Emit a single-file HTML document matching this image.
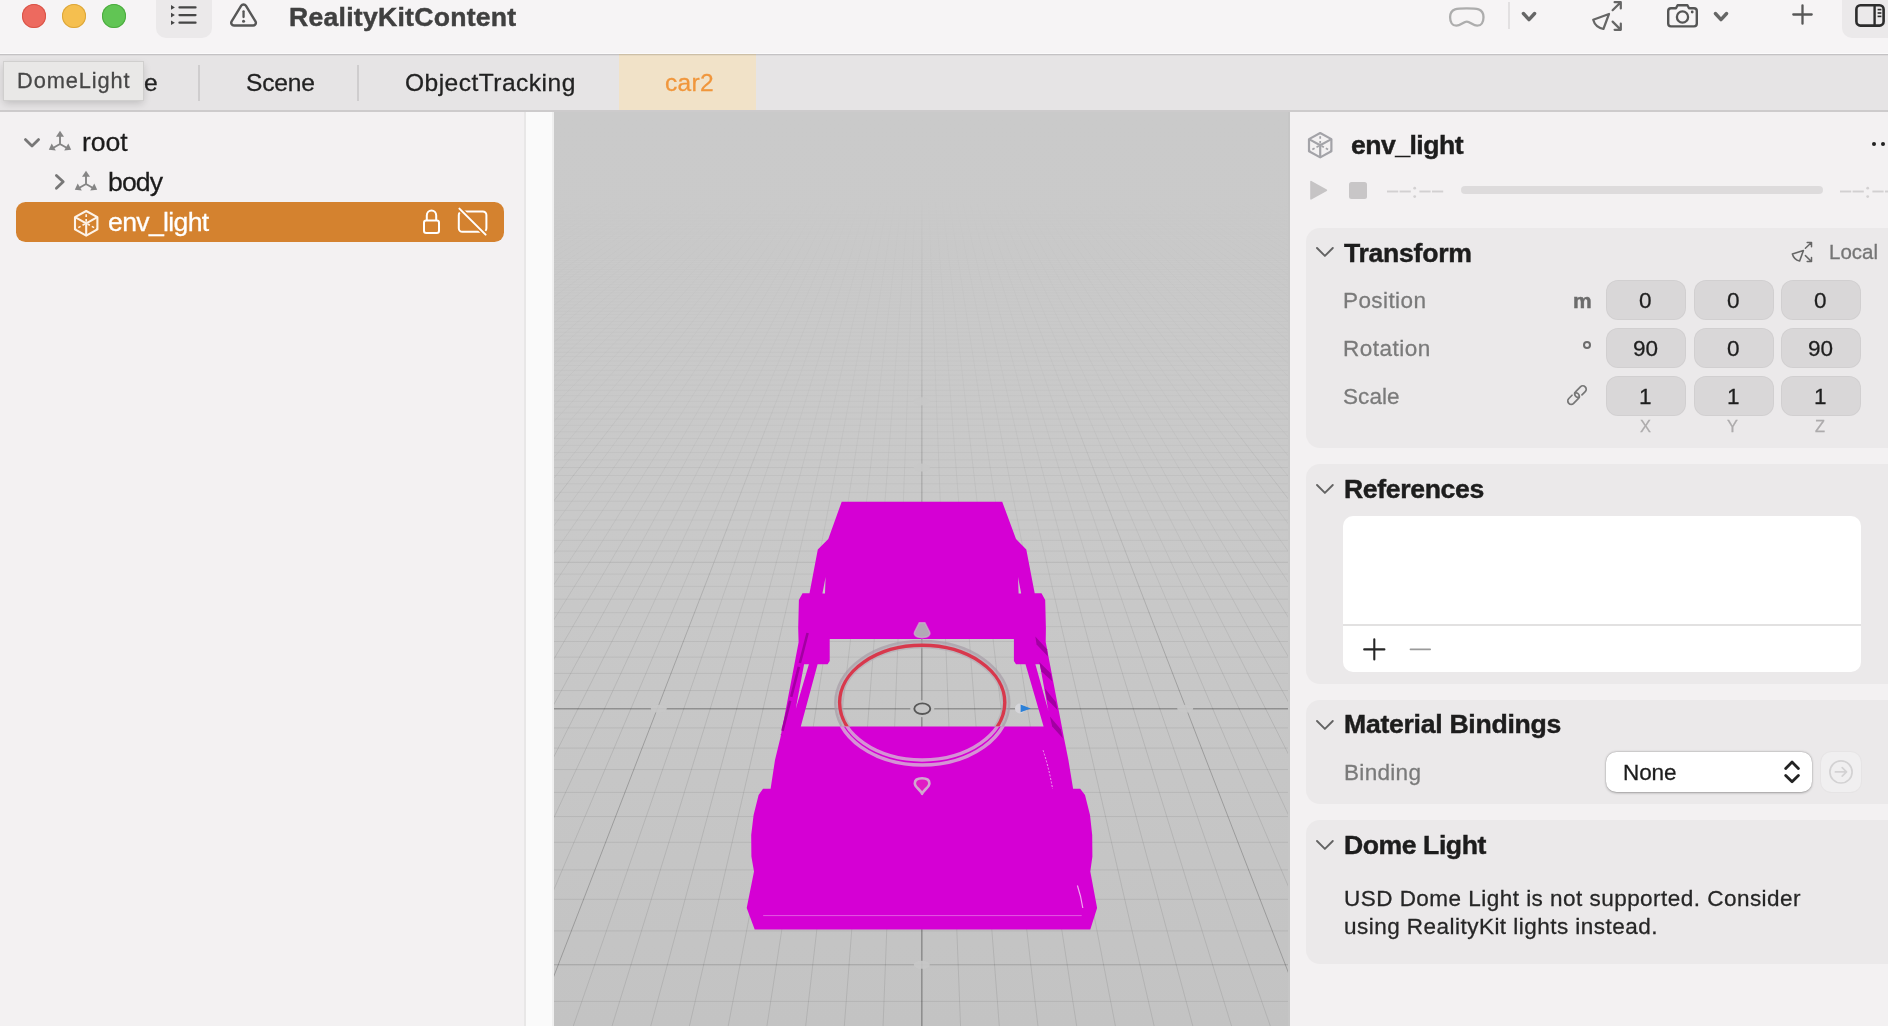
<!DOCTYPE html>
<html><head><meta charset="utf-8"><title>RealityKitContent</title>
<style>
html,body{margin:0;padding:0;}
html{width:1888px;height:1026px;overflow:hidden;}
body{width:1888px;height:1026px;overflow:hidden;background:#f3f1f2;font-family:"Liberation Sans",sans-serif;position:relative;}
.b{position:absolute;display:block;}
.t{position:absolute;white-space:nowrap;line-height:1;will-change:transform;}
#w{position:absolute;left:0;top:0;width:1888px;height:1026px;overflow:hidden;}
</style></head><body><div id="w">
<div class="b" style="left:554px;top:112px;width:734px;height:914px;background:linear-gradient(#cacaca,#c9c9c9 45%,#c3c3c3)"></div>
<svg class="b" style="left:554px;top:112px" width="734" height="914" viewBox="554 112 734 914"><defs><linearGradient id="fade" x1="0" y1="0" x2="0" y2="1" gradientUnits="objectBoundingBox"><stop offset="0.0000" stop-color="#fff" stop-opacity="0"/><stop offset="0.0908" stop-color="#fff" stop-opacity="0"/><stop offset="0.1619" stop-color="#fff" stop-opacity="0.13"/><stop offset="0.3151" stop-color="#fff" stop-opacity="0.3"/><stop offset="0.4902" stop-color="#fff" stop-opacity="0.62"/><stop offset="0.6433" stop-color="#fff" stop-opacity="1"/><stop offset="1.0000" stop-color="#fff" stop-opacity="1"/></linearGradient><linearGradient id="fade2" x1="0" y1="0" x2="0" y2="1" gradientUnits="objectBoundingBox"><stop offset="0.0000" stop-color="#fff" stop-opacity="0"/><stop offset="0.0908" stop-color="#fff" stop-opacity="0"/><stop offset="0.2057" stop-color="#fff" stop-opacity="0.07"/><stop offset="0.3151" stop-color="#fff" stop-opacity="0.14"/><stop offset="0.4902" stop-color="#fff" stop-opacity="0.45"/><stop offset="0.6433" stop-color="#fff" stop-opacity="1"/><stop offset="1.0000" stop-color="#fff" stop-opacity="1"/></linearGradient><mask id="gm" maskUnits="userSpaceOnUse" x="554" y="112" width="734" height="914"><rect x="554" y="112" width="734" height="914" fill="url(#fade)"/></mask><mask id="gm2" maskUnits="userSpaceOnUse" x="554" y="112" width="734" height="914"><rect x="554" y="112" width="734" height="914" fill="url(#fade2)"/></mask></defs><g mask="url(#gm)" fill="none"><path d="M455.6 200 L-1760.8 1030M462.3 200 L-1721.9 1030M469.1 200 L-1683.0 1030M475.8 200 L-1644.1 1030M482.6 200 L-1605.3 1030M489.4 200 L-1566.4 1030M496.1 200 L-1527.5 1030M502.9 200 L-1488.6 1030M509.6 200 L-1449.8 1030M523.1 200 L-1372.0 1030M529.9 200 L-1333.1 1030M536.6 200 L-1294.2 1030M543.4 200 L-1255.4 1030M550.2 200 L-1216.5 1030M556.9 200 L-1177.6 1030M563.7 200 L-1138.7 1030M570.4 200 L-1099.9 1030M577.2 200 L-1061.0 1030M590.7 200 L-983.2 1030M597.5 200 L-944.3 1030M604.2 200 L-905.5 1030M611.0 200 L-866.6 1030M617.7 200 L-827.7 1030M624.5 200 L-788.8 1030M631.2 200 L-750.0 1030M638.0 200 L-711.1 1030M644.8 200 L-672.2 1030M658.3 200 L-594.4 1030M665.0 200 L-555.6 1030M671.8 200 L-516.7 1030M678.5 200 L-477.8 1030M685.3 200 L-438.9 1030M692.1 200 L-400.1 1030M698.8 200 L-361.2 1030M705.6 200 L-322.3 1030M712.3 200 L-283.4 1030M725.8 200 L-205.7 1030M732.6 200 L-166.8 1030M739.4 200 L-127.9 1030M746.1 200 L-89.0 1030M752.9 200 L-50.2 1030M759.6 200 L-11.3 1030M766.4 200 L27.6 1030M773.1 200 L66.5 1030M779.9 200 L105.4 1030M793.4 200 L183.1 1030M800.2 200 L222.0 1030M806.9 200 L260.9 1030M813.7 200 L299.8 1030M820.4 200 L338.6 1030M827.2 200 L377.5 1030M834.0 200 L416.4 1030M840.7 200 L455.3 1030M847.5 200 L494.1 1030M861.0 200 L571.9 1030M867.7 200 L610.8 1030M874.5 200 L649.7 1030M881.3 200 L688.5 1030M888.0 200 L727.4 1030M894.8 200 L766.3 1030M901.5 200 L805.2 1030M908.3 200 L844.0 1030M915.0 200 L882.9 1030M928.6 200 L960.7 1030M935.3 200 L999.6 1030M942.1 200 L1038.4 1030M948.8 200 L1077.3 1030M955.6 200 L1116.2 1030M962.3 200 L1155.1 1030M969.1 200 L1193.9 1030M975.9 200 L1232.8 1030M982.6 200 L1271.7 1030M996.1 200 L1349.5 1030M1002.9 200 L1388.3 1030M1009.6 200 L1427.2 1030M1016.4 200 L1466.1 1030M1023.2 200 L1505.0 1030M1029.9 200 L1543.8 1030M1036.7 200 L1582.7 1030M1043.4 200 L1621.6 1030M1050.2 200 L1660.5 1030M1063.7 200 L1738.2 1030M1070.5 200 L1777.1 1030M1077.2 200 L1816.0 1030M1084.0 200 L1854.9 1030M1090.7 200 L1893.8 1030M1097.5 200 L1932.6 1030M1104.2 200 L1971.5 1030M1111.0 200 L2010.4 1030M1117.8 200 L2049.3 1030M1131.3 200 L2127.0 1030M1138.0 200 L2165.9 1030M1144.8 200 L2204.8 1030M1151.5 200 L2243.7 1030M1158.3 200 L2282.5 1030M1165.1 200 L2321.4 1030M1171.8 200 L2360.3 1030M1178.6 200 L2399.2 1030M1185.3 200 L2438.0 1030M1198.8 200 L2515.8 1030M1205.6 200 L2554.7 1030M1212.4 200 L2593.6 1030M1219.1 200 L2632.4 1030M1225.9 200 L2671.3 1030M1232.6 200 L2710.2 1030M1239.4 200 L2749.1 1030M1246.1 200 L2787.9 1030M1252.9 200 L2826.8 1030M1266.4 200 L2904.6 1030M1273.2 200 L2943.5 1030M1279.9 200 L2982.3 1030M1286.7 200 L3021.2 1030M1293.4 200 L3060.1 1030M1300.2 200 L3099.0 1030M1307.0 200 L3137.8 1030M1313.7 200 L3176.7 1030M1320.5 200 L3215.6 1030M1334.0 200 L3293.4 1030M1340.7 200 L3332.2 1030M1347.5 200 L3371.1 1030M1354.2 200 L3410.0 1030M1361.0 200 L3448.9 1030M1367.8 200 L3487.7 1030M1374.5 200 L3526.6 1030M1381.3 200 L3565.5 1030M1388.0 200 L3604.4 1030" stroke="#000" stroke-opacity="0.085" stroke-width="1"/><path d="M554 1001.4 H1288M554 930.9 H1288M554 899.3 H1288M554 869.9 H1288M554 842.3 H1288M554 816.6 H1288M554 792.4 H1288M554 769.6 H1288M554 748.1 H1288M554 727.9 H1288M554 690.6 H1288M554 673.4 H1288M554 657.1 H1288M554 641.5 H1288M554 626.7 H1288M554 612.7 H1288M554 599.2 H1288M554 586.4 H1288M554 574.1 H1288M554 551.1 H1288M554 540.3 H1288M554 529.9 H1288M554 520.0 H1288M554 510.4 H1288M554 501.2 H1288M554 492.3 H1288M554 483.8 H1288M554 475.5 H1288M554 459.9 H1288M554 452.5 H1288M554 445.4 H1288M554 438.5 H1288M554 431.8 H1288M554 425.3 H1288M554 419.0 H1288M554 412.9 H1288M554 407.0 H1288M554 395.7 H1288M554 390.3 H1288M554 385.1 H1288M554 380.0 H1288M554 375.1 H1288M554 370.3 H1288M554 365.6 H1288M554 361.0 H1288M554 356.6 H1288M554 348.1 H1288M554 344.0 H1288M554 340.0 H1288M554 336.1 H1288M554 332.3 H1288M554 328.5 H1288M554 324.9 H1288M554 321.4 H1288M554 317.9 H1288M554 311.3 H1288M554 308.0 H1288M554 304.9 H1288M554 301.8 H1288M554 298.8 H1288M554 295.8 H1288M554 292.9 H1288M554 290.1 H1288M554 287.4 H1288M554 282.0 H1288M554 279.4 H1288M554 276.8 H1288M554 274.3 H1288M554 271.9 H1288M554 269.5 H1288M554 267.1 H1288M554 264.8 H1288M554 262.6 H1288M554 258.2 H1288M554 256.0 H1288M554 253.9 H1288M554 251.9 H1288M554 249.8 H1288M554 247.8 H1288M554 245.9 H1288M554 244.0 H1288M554 242.1 H1288M554 238.4 H1288M554 236.6 H1288M554 234.8 H1288M554 233.1 H1288M554 231.4 H1288M554 229.7 H1288M554 228.1 H1288M554 226.4 H1288M554 224.8 H1288M554 221.7 H1288M554 220.2 H1288M554 218.7 H1288M554 217.2 H1288M554 215.7 H1288M554 214.3 H1288M554 212.9 H1288M554 211.5 H1288M554 210.1 H1288M554 207.4 H1288M554 206.1 H1288M554 204.8 H1288M554 203.6 H1288M554 202.3 H1288M554 201.1 H1288M554 199.8 H1288M554 198.6 H1288M554 197.4 H1288M554 195.1 H1288M554 194.0 H1288M554 192.9 H1288M554 191.7 H1288M554 190.6 H1288M554 189.6 H1288M554 188.5 H1288M554 187.4 H1288M554 186.4 H1288M554 184.4 H1288M554 183.4 H1288M554 182.4 H1288M554 181.4 H1288M554 180.4 H1288M554 179.5 H1288M554 178.5 H1288M554 177.6 H1288M554 176.7 H1288" stroke="#000" stroke-opacity="0.075" stroke-width="1"/></g><g mask="url(#gm2)" fill="none"><path d="M448.8 200 L-1799.7 1030M516.4 200 L-1410.9 1030M583.9 200 L-1022.1 1030M651.5 200 L-633.3 1030M719.1 200 L-244.5 1030M786.7 200 L144.2 1030M854.2 200 L533.0 1030M989.4 200 L1310.6 1030M1056.9 200 L1699.4 1030M1124.5 200 L2088.1 1030M1192.1 200 L2476.9 1030M1259.7 200 L2865.7 1030M1327.2 200 L3254.5 1030M1394.8 200 L3643.3 1030" stroke="#000" stroke-opacity="0.21" stroke-width="1"/><path d="M554 964.8 H1288M554 562.3 H1288M554 467.6 H1288M554 401.3 H1288M554 352.3 H1288M554 314.6 H1288M554 284.6 H1288M554 260.3 H1288M554 240.2 H1288M554 223.3 H1288M554 208.8 H1288M554 196.3 H1288M554 185.4 H1288M554 175.8 H1288" stroke="#000" stroke-opacity="0.18" stroke-width="1"/></g><g mask="url(#gm)" fill="none"><path d="M921.8 380 V1026" stroke="#000" stroke-opacity="0.27" stroke-width="1.6"/><path d="M921.8 200 V380" stroke="#000" stroke-opacity="0.2" stroke-width="1.6"/><path d="M554 708.7 H1288" stroke="#000" stroke-opacity="0.27" stroke-width="1.4"/></g><ellipse cx="658.8" cy="708.7" rx="8" ry="4" fill="#c8c8c8" opacity="0.9"/><ellipse cx="1185.2" cy="708.7" rx="8" ry="4" fill="#c8c8c8" opacity="0.9"/><ellipse cx="921.8" cy="964.8" rx="8" ry="4" fill="#c8c8c8" opacity="0.9"/><ellipse cx="921.8" cy="562.3" rx="8" ry="4" fill="#c8c8c8" opacity="0.9"/><ellipse cx="921.8" cy="467.6" rx="8" ry="4" fill="#c8c8c8" opacity="0.9"/><ellipse cx="921.8" cy="401.3" rx="8" ry="4" fill="#c8c8c8" opacity="0.9"/><path d="M841.7 501.7 L1002.2 501.7 L1016.0 539.0 L1026.3 549.5 L1034.7 593.2 L1041.5 593.2 L1045.2 600.0 L1045.9 628.0 L1045.7 642.0 L1063.9 737.5 L1068.4 760.0 L1073.1 788.8 L1080.2 788.8 L1085.0 795.0 L1090.0 815.0 L1092.2 835.0 L1092.4 856.5 L1090.3 871.5 L1097.1 908.0 L1090.3 929.4 L754.7 929.4 L746.7 908.0 L754.0 871.5 L751.4 856.5 L751.2 835.0 L753.6 815.0 L758.6 795.0 L763.0 788.8 L770.6 788.8 L775.0 760.0 L780.4 737.7 L798.6 642.2 L798.2 628.0 L798.9 600.0 L802.5 593.2 L809.5 593.2 L817.8 549.5 L828.3 539.0 Z M829.7 639.1 L1013.9 639.1 L1013.9 661.0 L1016.0 664.2 L1025.5 664.2 L1043.6 726.6 L800.8 726.6 L817.6 664.2 L827.6 664.2 L829.7 661.0 Z M804.1 664.3 L808.9 664.3 L795.6 709.5 Z M1035.4 664.2 L1039.8 664.2 L1048.4 711 Z" fill="#d500d4" fill-rule="evenodd"/><path d="M1035.3 636.6 L1047.0 649.2 L1047.9 656.6 L1036.6 644.4 Z" fill="#a200a2"/><path d="M1039.2 661.9 L1050.9 673.6 L1052.2 681.2 L1041.4 671.6 Z" fill="#a200a2"/><path d="M1044.7 688.2 L1055.8 701.9 L1057.5 710.0 L1047.2 699.4 Z" fill="#a200a2"/><path d="M1049.9 716.5 L1060.7 729.2 L1062.8 738.2 L1052.2 726.6 Z" fill="#a200a2"/><path d="M807.6 633 L781.4 735" stroke="#a200a2" stroke-width="2.6" fill="none" stroke-dasharray="31 4" stroke-dashoffset="0"/><path d="M825.6 577 L822.4 593.4 L825 593.4 Z M1018 577 L1021.2 593.4 L1018.6 593.4 Z" fill="#c7c7c7"/><path d="M763.2 915.6 H1081.7" stroke="#ea88ea" stroke-width="1" fill="none" stroke-opacity="0.65"/><path d="M1077.4 885.5 Q1081 896 1082.8 908" stroke="#f0a6f0" stroke-width="1.2" fill="none"/><path d="M1043.1 750.3 Q1049 768 1052.6 789" stroke="#f0a0f0" stroke-width="1" stroke-dasharray="2 1.6" fill="none"/><defs><clipPath id="cu"><rect x="800" y="630" width="250" height="96.6"/></clipPath><clipPath id="cl"><rect x="800" y="726.6" width="250" height="60"/></clipPath></defs><g clip-path="url(#cu)" fill="none"><ellipse cx="922.3" cy="703" rx="87" ry="62" stroke="#a79da7" stroke-width="2.4" stroke-opacity="0.7"/><ellipse cx="922.2" cy="702.6" rx="82.6" ry="57.3" stroke="#b3a9b3" stroke-width="6.6" stroke-opacity="0.6"/><ellipse cx="922.2" cy="702.6" rx="82.6" ry="57.3" stroke="#d8384c" stroke-width="3.4"/></g><g clip-path="url(#cl)" fill="none" stroke="#d6ccd6" stroke-opacity="0.72" stroke-width="3.5"><ellipse cx="922.3" cy="703" rx="87" ry="62"/><ellipse cx="922.2" cy="702.6" rx="82.6" ry="57.3"/></g><ellipse cx="922.3" cy="708.7" rx="12" ry="8.5" fill="#c6c6c6"/><ellipse cx="922.3" cy="708.7" rx="8" ry="5.3" fill="none" stroke="#585858" stroke-width="1.9"/><circle cx="1020" cy="708.5" r="5" fill="#d6d6da"/><path d="M1020.6 704.6 L1030.8 708.4 L1020.6 712.2 Z" fill="#2b80d8"/><path d="M919.4 622.7 L924.8 622.7 L929.6 632 C930.6 634.2 929.4 637.4 922.1 637.6 C914.8 637.4 913.6 634.2 914.6 632 Z" fill="#b2a8b6" stroke="#d0acd0" stroke-opacity="0.7" stroke-width="1.6" stroke-linejoin="round"/><path d="M922.1 793.8 C920.4 789.8 914.8 787 914.8 783.4 C914.8 779.6 918 778.3 922.1 778.3 C926.2 778.3 929.4 779.6 929.4 783.4 C929.4 787 923.8 789.8 922.1 793.8 Z" fill="#e01cc4" stroke="#d0c2d0" stroke-opacity="0.85" stroke-width="2.6" stroke-linejoin="round"/></svg>
<div class="b" style="left:0px;top:112px;width:524px;height:914px;background:#f3f1f2;"></div>
<div class="b" style="left:524px;top:112px;width:2px;height:914px;background:#e8e7e7;"></div>
<div class="b" style="left:526px;top:112px;width:26px;height:914px;background:#fafafa;"></div>
<div class="b" style="left:552px;top:112px;width:2px;height:914px;background:#efefef;"></div>
<svg class="b" style="left:20px;top:134px;" width="24" height="18" viewBox="20 134 24 18"><path d="M25.4 139.6 L32 146 L38.6 139.6" fill="none" stroke="#777" stroke-width="2.8" stroke-linecap="round" stroke-linejoin="round"/></svg>
<svg class="b" style="left:45.85px;top:128.2px;" width="28" height="26" viewBox="45.85 128.2 28 26"><g fill="#858585" stroke="none"><path d="M59.85 131 L63.85 137 L55.85 137 Z"/><path d="M48.65 150 L51.55 143.8 L55.65 150.8 Z"/><path d="M71.05 150 L68.15 143.8 L64.05 150.8 Z"/></g><path d="M59.85 136.2 L59.85 144.2 M59.85 144.2 L52.85 148.2 M59.85 144.2 L66.85 148.2" stroke="#858585" stroke-width="1.9" fill="none"/></svg>
<div class="t" style="left:81.60px;top:128.96px;font-size:26.624px;-webkit-text-stroke:0.28px;letter-spacing:-0.093px;color:#1c1c1c;">root</div>
<svg class="b" style="left:50px;top:170px;" width="20" height="24" viewBox="50 170 20 24"><path d="M56.4 175.4 L63.2 181.8 L56.4 188.2" fill="none" stroke="#777" stroke-width="2.8" stroke-linecap="round" stroke-linejoin="round"/></svg>
<svg class="b" style="left:72px;top:167.9px;" width="28" height="26" viewBox="72 167.9 28 26"><g fill="#858585" stroke="none"><path d="M86 170.7 L90 176.7 L82 176.7 Z"/><path d="M74.8 189.7 L77.7 183.5 L81.8 190.5 Z"/><path d="M97.2 189.7 L94.3 183.5 L90.2 190.5 Z"/></g><path d="M86 175.9 L86 183.9 M86 183.9 L79 187.9 M86 183.9 L93 187.9" stroke="#858585" stroke-width="1.9" fill="none"/></svg>
<div class="t" style="left:108.40px;top:169.06px;font-size:26.624px;-webkit-text-stroke:0.28px;letter-spacing:-0.912px;color:#1c1c1c;">body</div>
<div class="b" style="left:16px;top:202.2px;width:488px;height:39.6px;background:#d4822f;border-radius:9.5px;"></div>
<svg class="b" style="left:71.8px;top:207.6px;" width="28.4" height="30.6" viewBox="71.8 207.6 28.4 30.6"><path d="M86 210.6 L97.2 216.75 L97.2 229.05 L86 235.2 L74.8 229.05 L74.8 216.75 Z" fill="none" stroke="#fdf3e8" stroke-width="2.1" stroke-linejoin="round"/><path d="M86 222.9 L74.8 216.75 M86 222.9 L97.2 216.75 M86 222.9 L86 235.2" fill="none" stroke="#fdf3e8" stroke-width="2.1"/><path d="M86 222.9 L86 210.6 M86 222.9 L74.8 229.05 M86 222.9 L97.2 229.05" fill="none" stroke="#fdf3e8" stroke-width="1.68" stroke-dasharray="2.6 2.2" stroke-dashoffset="-1.6"/></svg>
<div class="t" style="left:107.70px;top:209.06px;font-size:26.624px;-webkit-text-stroke:0.28px;letter-spacing:-0.660px;color:#ffffff;">env_light</div>
<svg class="b" style="left:420px;top:206px;" width="24" height="30" viewBox="420 206 24 30"><rect x="424" y="220.6" width="15" height="12.4" rx="2.2" fill="none" stroke="#fff" stroke-width="2"/><path d="M426.8 220.4 L426.8 215.6 A4.7 5.2 0 0 1 436.2 215.6 L436.2 220.4" fill="none" stroke="#fff" stroke-width="2"/></svg>
<svg class="b" style="left:454px;top:204px;" width="38" height="34" viewBox="454 204 38 34"><rect x="458.8" y="211.4" width="27.6" height="20.4" rx="3.6" fill="none" stroke="#fff" stroke-width="2"/><line x1="459" y1="208.2" x2="485.8" y2="234.8" stroke="#d4822f" stroke-width="5"/><line x1="459.4" y1="208.6" x2="485.6" y2="234.6" stroke="#fff" stroke-width="2" stroke-linecap="round"/></svg>
<div class="b" style="left:1290px;top:112px;width:598px;height:914px;background:#f3f1f2;"></div>
<div class="b" style="left:1288px;top:112px;width:2px;height:914px;background:#c6c6c6;"></div>
<svg class="b" style="left:1305.9px;top:129.6px;" width="28.4" height="30.4" viewBox="1305.9 129.6 28.4 30.4"><path d="M1320.1 132.6 L1331.3 138.7 L1331.3 150.9 L1320.1 157 L1308.9 150.9 L1308.9 138.7 Z" fill="none" stroke="#a3a3a8" stroke-width="2.2" stroke-linejoin="round"/><path d="M1320.1 144.8 L1308.9 138.7 M1320.1 144.8 L1331.3 138.7 M1320.1 144.8 L1320.1 157" fill="none" stroke="#a3a3a8" stroke-width="2.2"/><path d="M1320.1 144.8 L1320.1 132.6 M1320.1 144.8 L1308.9 150.9 M1320.1 144.8 L1331.3 150.9" fill="none" stroke="#a3a3a8" stroke-width="1.76" stroke-dasharray="2.6 2.2" stroke-dashoffset="-1.6"/></svg>
<div class="t" style="left:1351.00px;top:131.66px;font-size:26.624px;font-weight:bold;-webkit-text-stroke:0.45px;letter-spacing:-0.534px;color:#1d1d1d;">env_light</div>
<div class="b" style="left:1871.75px;top:141.9px;width:4.6px;height:4.6px;border-radius:3px;background:#222"></div>
<div class="b" style="left:1880.7px;top:141.9px;width:4.6px;height:4.6px;border-radius:3px;background:#222"></div>
<svg class="b" style="left:1306px;top:178px;" width="26" height="26" viewBox="1306 178 26 26"><path d="M1311 181.6 L1326.4 190.2 L1311 198.8 Z" fill="#c6c4c5" stroke="#c6c4c5" stroke-width="1.6" stroke-linejoin="round"/></svg>
<div class="b" style="left:1349.2px;top:182.4px;width:17.4px;height:16.2px;background:#c8c6c7;border-radius:2.5px;"></div>
<svg class="b" style="left:1384px;top:184px;" width="64" height="16" viewBox="1384 184 64 16"><line x1="1387" y1="191.5" x2="1398.2" y2="191.5" stroke="#d2d0d1" stroke-width="1.9"/><line x1="1399.6" y1="191.5" x2="1410.8" y2="191.5" stroke="#d2d0d1" stroke-width="1.9"/><line x1="1419.4" y1="191.5" x2="1430.6" y2="191.5" stroke="#d2d0d1" stroke-width="1.9"/><line x1="1432" y1="191.5" x2="1443.2" y2="191.5" stroke="#d2d0d1" stroke-width="1.9"/><circle cx="1414.7" cy="188.2" r="1.4" fill="#d3d1d2"/><circle cx="1414.7" cy="196.6" r="1.4" fill="#d3d1d2"/></svg>
<div class="b" style="left:1461px;top:186.2px;width:362px;height:8.2px;background:#dddbdc;border-radius:4.1px;"></div>
<svg class="b" style="left:1836px;top:184px;" width="52" height="16" viewBox="1836 184 52 16"><line x1="1840" y1="191.5" x2="1851.2" y2="191.5" stroke="#d2d0d1" stroke-width="1.9"/><line x1="1852.6" y1="191.5" x2="1863.8" y2="191.5" stroke="#d2d0d1" stroke-width="1.9"/><line x1="1872.4" y1="191.5" x2="1883.6" y2="191.5" stroke="#d2d0d1" stroke-width="1.9"/><line x1="1885" y1="191.5" x2="1896.2" y2="191.5" stroke="#d2d0d1" stroke-width="1.9"/><circle cx="1867.7" cy="188.2" r="1.4" fill="#d3d1d2"/><circle cx="1867.7" cy="196.6" r="1.4" fill="#d3d1d2"/></svg>
<div class="b" style="left:1306px;top:228px;width:600px;height:220px;background:#ebe9ea;border-radius:14px;"></div>
<svg class="b" style="left:1313.6px;top:245.3px;" width="21.8" height="13.9" viewBox="1313.6 245.3 21.8 13.9"><path d="M1316.6 248.3 L1324.5 256.2 L1332.4 248.3" fill="none" stroke="#636363" stroke-width="1.9" stroke-linecap="round" stroke-linejoin="round"/></svg>
<div class="t" style="left:1344.20px;top:240.06px;font-size:26.624px;font-weight:bold;-webkit-text-stroke:0.45px;letter-spacing:-0.275px;color:#1d1d1d;">Transform</div>
<svg class="b" style="left:1788px;top:238px;" width="28" height="28" viewBox="1788 238 28 28"><path d="M1803.4 250.6 L1799.6 261 C1796 260.2 1793.2 257.4 1792.4 253.9 Z" fill="none" stroke="#666" stroke-width="1.6" stroke-linejoin="round"/><path d="M1805.4 248.2 L1811.2 242.8 M1807.2 242.6 L1811.5 242.6 L1811.5 246.8" fill="none" stroke="#666" stroke-width="1.5" stroke-linecap="round" stroke-linejoin="round"/><path d="M1805.4 255.6 L1811.2 261.2 M1807.2 261.5 L1811.5 261.5 L1811.5 257.4" fill="none" stroke="#666" stroke-width="1.5" stroke-linecap="round" stroke-linejoin="round"/></svg>
<div class="t" style="left:1829.10px;top:242.26px;font-size:20.48px;-webkit-text-stroke:0.28px;letter-spacing:0.010px;color:#757575;">Local</div>
<div class="t" style="left:1343.20px;top:289.53px;font-size:22.528px;-webkit-text-stroke:0.28px;letter-spacing:0.407px;color:#7a7a7a;">Position</div>
<div class="b" style="left:1606px;top:280px;width:80px;height:40px;background:#d9d7d8;border-radius:12px;box-shadow:inset 0 0 0 1px rgba(0,0,0,.035);"></div><div class="t" style="left:1639.14px;top:289.63px;font-size:22.528px;-webkit-text-stroke:0.28px;color:#1e1e1e;">0</div>
<div class="b" style="left:1693.6px;top:280px;width:80px;height:40px;background:#d9d7d8;border-radius:12px;box-shadow:inset 0 0 0 1px rgba(0,0,0,.035);"></div><div class="t" style="left:1726.74px;top:289.63px;font-size:22.528px;-webkit-text-stroke:0.28px;color:#1e1e1e;">0</div>
<div class="b" style="left:1781px;top:280px;width:80px;height:40px;background:#d9d7d8;border-radius:12px;box-shadow:inset 0 0 0 1px rgba(0,0,0,.035);"></div><div class="t" style="left:1814.14px;top:289.63px;font-size:22.528px;-webkit-text-stroke:0.28px;color:#1e1e1e;">0</div>
<div class="t" style="left:1343.20px;top:337.53px;font-size:22.528px;-webkit-text-stroke:0.28px;letter-spacing:0.484px;color:#7a7a7a;">Rotation</div>
<div class="b" style="left:1606px;top:328px;width:80px;height:40px;background:#d9d7d8;border-radius:12px;box-shadow:inset 0 0 0 1px rgba(0,0,0,.035);"></div><div class="t" style="left:1632.87px;top:337.63px;font-size:22.528px;-webkit-text-stroke:0.28px;color:#1e1e1e;">90</div>
<div class="b" style="left:1693.6px;top:328px;width:80px;height:40px;background:#d9d7d8;border-radius:12px;box-shadow:inset 0 0 0 1px rgba(0,0,0,.035);"></div><div class="t" style="left:1726.74px;top:337.63px;font-size:22.528px;-webkit-text-stroke:0.28px;color:#1e1e1e;">0</div>
<div class="b" style="left:1781px;top:328px;width:80px;height:40px;background:#d9d7d8;border-radius:12px;box-shadow:inset 0 0 0 1px rgba(0,0,0,.035);"></div><div class="t" style="left:1807.87px;top:337.63px;font-size:22.528px;-webkit-text-stroke:0.28px;color:#1e1e1e;">90</div>
<div class="t" style="left:1343.20px;top:385.53px;font-size:22.528px;-webkit-text-stroke:0.28px;letter-spacing:0.061px;color:#7a7a7a;">Scale</div>
<div class="b" style="left:1606px;top:376px;width:80px;height:40px;background:#d9d7d8;border-radius:12px;box-shadow:inset 0 0 0 1px rgba(0,0,0,.035);"></div><div class="t" style="left:1639.14px;top:385.63px;font-size:22.528px;-webkit-text-stroke:0.28px;color:#1e1e1e;">1</div>
<div class="b" style="left:1693.6px;top:376px;width:80px;height:40px;background:#d9d7d8;border-radius:12px;box-shadow:inset 0 0 0 1px rgba(0,0,0,.035);"></div><div class="t" style="left:1726.74px;top:385.63px;font-size:22.528px;-webkit-text-stroke:0.28px;color:#1e1e1e;">1</div>
<div class="b" style="left:1781px;top:376px;width:80px;height:40px;background:#d9d7d8;border-radius:12px;box-shadow:inset 0 0 0 1px rgba(0,0,0,.035);"></div><div class="t" style="left:1814.14px;top:385.63px;font-size:22.528px;-webkit-text-stroke:0.28px;color:#1e1e1e;">1</div>
<div class="t" style="left:1572.60px;top:289.53px;font-size:20.992px;font-weight:bold;-webkit-text-stroke:0.45px;color:#6c6c6c;">m</div>
<div class="b" style="left:1582.6px;top:341px;width:8px;height:8px;border-radius:5px;box-shadow:inset 0 0 0 2px #6c6c6c"></div>
<svg class="b" style="left:1562px;top:380px;" width="30" height="30" viewBox="1562 380 30 30"><g transform="translate(1577 395.1) rotate(-45)" fill="none" stroke="#777" stroke-width="1.7" stroke-linecap="round"><path d="M-3.6 -3.4 L-8.2 -3.4 A3.4 3.4 0 0 0 -8.2 3.4 L-1.6 3.4 A3.4 3.4 0 0 0 -0.2 -3.1"/><path d="M3.6 3.4 L8.2 3.4 A3.4 3.4 0 0 0 8.2 -3.4 L1.6 -3.4 A3.4 3.4 0 0 0 0.2 3.1"/></g></svg>
<div class="t" style="left:1639.94px;top:417.73px;font-size:16.384px;-webkit-text-stroke:0.28px;color:#adabac;">X</div>
<div class="t" style="left:1727.14px;top:417.73px;font-size:16.384px;-webkit-text-stroke:0.28px;color:#adabac;">Y</div>
<div class="t" style="left:1815.40px;top:417.73px;font-size:16.384px;-webkit-text-stroke:0.28px;color:#adabac;">Z</div>
<div class="b" style="left:1306px;top:464px;width:600px;height:219.5px;background:#ebe9ea;border-radius:14px;"></div>
<svg class="b" style="left:1313.6px;top:481.5px;" width="21.8" height="13.9" viewBox="1313.6 481.5 21.8 13.9"><path d="M1316.6 484.5 L1324.5 492.4 L1332.4 484.5" fill="none" stroke="#636363" stroke-width="1.9" stroke-linecap="round" stroke-linejoin="round"/></svg>
<div class="t" style="left:1344.00px;top:476.16px;font-size:26.624px;font-weight:bold;-webkit-text-stroke:0.45px;letter-spacing:-0.352px;color:#1d1d1d;">References</div>
<div class="b" style="left:1343px;top:516.4px;width:518px;height:155.4px;background:#ffffff;border-radius:10px;"></div>
<div class="b" style="left:1343px;top:624px;width:518px;height:1.6px;background:#e2e1e1;"></div>
<svg class="b" style="left:1360px;top:636px;" width="76" height="28" viewBox="1360 636 76 28"><path d="M1364.2 649.4 L1384.4 649.4 M1374.3 639.3 L1374.3 659.5" stroke="#262626" stroke-width="2.1" stroke-linecap="round"/><path d="M1410.4 649.4 L1430.2 649.4" stroke="#9a9a9a" stroke-width="1.6" stroke-linecap="round"/></svg>
<div class="b" style="left:1306px;top:700px;width:600px;height:104px;background:#ebe9ea;border-radius:14px;"></div>
<svg class="b" style="left:1313.6px;top:717.7px;" width="21.8" height="13.9" viewBox="1313.6 717.7 21.8 13.9"><path d="M1316.6 720.7 L1324.5 728.6 L1332.4 720.7" fill="none" stroke="#636363" stroke-width="1.9" stroke-linecap="round" stroke-linejoin="round"/></svg>
<div class="t" style="left:1344.00px;top:711.16px;font-size:26.624px;font-weight:bold;-webkit-text-stroke:0.45px;letter-spacing:-0.281px;color:#1d1d1d;">Material Bindings</div>
<div class="t" style="left:1343.60px;top:761.63px;font-size:22.528px;-webkit-text-stroke:0.28px;letter-spacing:0.307px;color:#7a7a7a;">Binding</div>
<div class="b" style="left:1606.3px;top:752px;width:205.8px;height:40px;background:#ffffff;border-radius:10.5px;box-shadow:0 0.5px 2.5px rgba(0,0,0,.32),0 0 0 0.5px rgba(0,0,0,.06);"></div>
<div class="t" style="left:1622.80px;top:761.63px;font-size:22.528px;-webkit-text-stroke:0.28px;letter-spacing:-0.086px;color:#1d1d1d;">None</div>
<svg class="b" style="left:1780px;top:756px;" width="24" height="32" viewBox="1780 756 24 32"><path d="M1785.7 768.5 L1792.05 762.1 L1798.4 768.5 M1785.7 775.4 L1792.05 781.8 L1798.4 775.4" fill="none" stroke="#232323" stroke-width="2.8" stroke-linecap="round" stroke-linejoin="round"/></svg>
<div class="b" style="left:1821px;top:752px;width:39.6px;height:40px;background:#f0eff0;border-radius:10.5px;box-shadow:0 0 0 1px rgba(0,0,0,.02);"></div>
<svg class="b" style="left:1826px;top:757px;" width="30" height="30" viewBox="1826 757 30 30"><circle cx="1841" cy="771.9" r="11.1" fill="none" stroke="#d3d2d3" stroke-width="1.7"/><path d="M1835.4 771.9 L1846.4 771.9 M1842.2 767.6 L1846.5 771.9 L1842.2 776.2" fill="none" stroke="#d3d2d3" stroke-width="1.7" stroke-linecap="round" stroke-linejoin="round"/></svg>
<div class="b" style="left:1306px;top:819.6px;width:600px;height:144.2px;background:#ebe9ea;border-radius:14px;"></div>
<svg class="b" style="left:1313.6px;top:837.9px;" width="21.8" height="13.9" viewBox="1313.6 837.9 21.8 13.9"><path d="M1316.6 840.9 L1324.5 848.8 L1332.4 840.9" fill="none" stroke="#636363" stroke-width="1.9" stroke-linecap="round" stroke-linejoin="round"/></svg>
<div class="t" style="left:1344.00px;top:831.96px;font-size:26.624px;font-weight:bold;-webkit-text-stroke:0.45px;letter-spacing:-0.447px;color:#1d1d1d;">Dome Light</div>
<div class="t" style="left:1343.80px;top:887.83px;font-size:22.528px;-webkit-text-stroke:0.28px;letter-spacing:0.463px;color:#262626;">USD Dome Light is not supported. Consider</div>
<div class="t" style="left:1343.80px;top:916.13px;font-size:22.528px;-webkit-text-stroke:0.28px;letter-spacing:0.462px;color:#262626;">using RealityKit lights instead.</div>
<div class="b" style="left:0px;top:0px;width:1888px;height:54px;background:#f6f4f5;"></div>
<div class="b" style="left:0px;top:53px;width:1888px;height:1px;background:#fbfafb;"></div>
<div class="b" style="left:0px;top:54px;width:1888px;height:1px;background:#c4c2c4;"></div>
<div class="b" style="left:0px;top:55px;width:1888px;height:55px;background:#e6e4e5;"></div>
<div class="b" style="left:0px;top:55px;width:1888px;height:1px;background:#dcdadb;"></div>
<div class="b" style="left:0px;top:110px;width:1888px;height:2px;background:#cdcbcc;"></div>
<div class="b" style="left:22px;top:4px;width:24px;height:24px;border-radius:12px;background:#ed6a5f;box-shadow:inset 0 0 0 1px #d95448"></div>
<div class="b" style="left:62px;top:4px;width:24px;height:24px;border-radius:12px;background:#f5bf4f;box-shadow:inset 0 0 0 1px #dca63a"></div>
<div class="b" style="left:102px;top:4px;width:24px;height:24px;border-radius:12px;background:#61c554;box-shadow:inset 0 0 0 1px #4cab3f"></div>
<div class="b" style="left:156px;top:-12px;width:56px;height:50px;background:#ebe9ea;border-radius:10px;"></div>
<svg class="b" style="left:160px;top:0px;" width="50" height="40" viewBox="160 0 50 40"><path d="M171 5.10 L174.9 7.40 L171 9.70 Z" fill="#464646"/><line x1="179.5" y1="7.40" x2="195.5" y2="7.40" stroke="#464646" stroke-width="2.3" stroke-linecap="round"/><path d="M171 12.80 L174.9 15.10 L171 17.40 Z" fill="#464646"/><line x1="179.5" y1="15.10" x2="195.5" y2="15.10" stroke="#464646" stroke-width="2.3" stroke-linecap="round"/><path d="M171 20.40 L174.9 22.70 L171 25.00 Z" fill="#464646"/><line x1="179.5" y1="22.70" x2="195.5" y2="22.70" stroke="#464646" stroke-width="2.3" stroke-linecap="round"/></svg>
<svg class="b" style="left:226px;top:0px;" width="36" height="32" viewBox="226 0 36 32"><path d="M241.25 5.74 A2.70 2.70 0 0 1 245.85 5.74 L255.47 21.39 A2.70 2.70 0 0 1 253.17 25.50 L233.93 25.50 A2.70 2.70 0 0 1 231.63 21.39 Z" fill="none" stroke="#575757" stroke-width="2.4"/><line x1="243.55" y1="11.3" x2="243.55" y2="17" stroke="#575757" stroke-width="2.3" stroke-linecap="round"/><circle cx="243.55" cy="21.3" r="1.55" fill="#575757"/></svg>
<div class="t" style="left:289.20px;top:3.86px;font-size:26.624px;font-weight:bold;-webkit-text-stroke:0.45px;letter-spacing:0.246px;color:#404040;">RealityKitContent</div>
<svg class="b" style="left:1444px;top:2px;" width="46" height="30" viewBox="1444 2 46 30"><path d="M1466.8 8.4 C1461 8.4 1457.5 8.6 1455 9.4 C1451.5 10.6 1450.1 13.6 1450.1 17.2 C1450.1 22 1452.4 25.7 1456.4 25.7 C1460.6 25.7 1463.4 21.7 1466.8 21.7 C1470.2 21.7 1473 25.7 1477.2 25.7 C1481.2 25.7 1483.5 22 1483.5 17.2 C1483.5 13.6 1482.1 10.6 1478.6 9.4 C1476.1 8.6 1472.6 8.4 1466.8 8.4 Z" fill="none" stroke="#adadad" stroke-width="2.3"/></svg>
<div class="b" style="left:1508px;top:2px;width:2px;height:27px;background:#e2e0e1;"></div>
<svg class="b" style="left:1519px;top:6px;" width="20" height="20" viewBox="1519 6 20 20"><path d="M1523.4 13.5 L1529 19.6 L1534.6 13.5" fill="none" stroke="#666" stroke-width="3.4" stroke-linecap="round" stroke-linejoin="round"/></svg>
<svg class="b" style="left:1711px;top:6px;" width="20" height="20" viewBox="1711 6 20 20"><path d="M1715.4 13.5 L1721 19.6 L1726.6 13.5" fill="none" stroke="#666" stroke-width="3.4" stroke-linecap="round" stroke-linejoin="round"/></svg>
<svg class="b" style="left:1588px;top:0px;" width="38" height="34" viewBox="1588 0 38 34"><path d="M1609 14 L1603.4 29 C1598.5 28 1594.5 24.5 1593.2 19.8 Z" fill="none" stroke="#666" stroke-width="2.2" stroke-linejoin="round"/><path d="M1612.6 10.2 L1620.6 2.4 M1614.6 2.2 L1620.8 2.2 L1620.8 8.4" fill="none" stroke="#666" stroke-width="2.2" stroke-linecap="round" stroke-linejoin="round"/><path d="M1612.6 21.6 L1620.6 29.6 M1614.6 29.8 L1620.8 29.8 L1620.8 23.6" fill="none" stroke="#666" stroke-width="2.2" stroke-linecap="round" stroke-linejoin="round"/></svg>
<svg class="b" style="left:1662px;top:0px;" width="40" height="32" viewBox="1662 0 40 32"><path d="M1671 8.2 L1676 8.2 L1677.6 5.2 L1687.4 5.2 L1689 8.2 L1694 8.2 Q1696.8 8.2 1696.8 11 L1696.8 23.6 Q1696.8 26.4 1694 26.4 L1671 26.4 Q1668.2 26.4 1668.2 23.6 L1668.2 11 Q1668.2 8.2 1671 8.2 Z" fill="none" stroke="#555" stroke-width="2.4" stroke-linejoin="round"/><circle cx="1682.5" cy="17" r="5.6" fill="none" stroke="#555" stroke-width="2.3"/><circle cx="1692.2" cy="12" r="1.4" fill="#555"/></svg>
<svg class="b" style="left:1788px;top:0px;" width="30" height="30" viewBox="1788 0 30 30"><path d="M1793.3 14.5 L1811.7 14.5 M1802.5 5.3 L1802.5 23.7" stroke="#585858" stroke-width="2.3" stroke-linecap="round"/></svg>
<div class="b" style="left:1842px;top:-12px;width:60px;height:50px;background:#ebe9ea;border-radius:10px;"></div>
<svg class="b" style="left:1850px;top:0px;" width="38" height="32" viewBox="1850 0 38 32"><rect x="1856.4" y="5.2" width="27.2" height="20.4" rx="4" fill="none" stroke="#2c2c2c" stroke-width="2.6"/><line x1="1874.6" y1="5.2" x2="1874.6" y2="25.6" stroke="#2c2c2c" stroke-width="2.4"/><line x1="1877.6" y1="9.6" x2="1881.4" y2="9.6" stroke="#2c2c2c" stroke-width="1.6"/><line x1="1877.6" y1="13" x2="1881.4" y2="13" stroke="#2c2c2c" stroke-width="1.6"/><line x1="1877.6" y1="16.4" x2="1881.4" y2="16.4" stroke="#2c2c2c" stroke-width="1.6"/></svg>
<div class="b" style="left:618.6px;top:54px;width:137.2px;height:56px;background:#f1e2c8;"></div>
<div class="b" style="left:618.6px;top:54px;width:137.2px;height:1px;background:#cdbfa6;"></div>
<div class="b" style="left:618.6px;top:55px;width:137.2px;height:1px;background:#e6d8c0;"></div>
<div class="b" style="left:198px;top:65px;width:1.6px;height:35.8px;background:#cfcdce;"></div>
<div class="b" style="left:357px;top:65px;width:1.6px;height:35.8px;background:#cfcdce;"></div>
<div class="t" style="left:143.90px;top:70.70px;font-size:24.576px;-webkit-text-stroke:0.28px;color:#222;">e</div>
<div class="t" style="left:246.00px;top:70.70px;font-size:24.576px;-webkit-text-stroke:0.28px;letter-spacing:-0.197px;color:#222;">Scene</div>
<div class="t" style="left:405.00px;top:70.70px;font-size:24.576px;-webkit-text-stroke:0.28px;letter-spacing:0.465px;color:#222;">ObjectTracking</div>
<div class="t" style="left:665.00px;top:70.70px;font-size:24.576px;-webkit-text-stroke:0.28px;letter-spacing:0.263px;color:#f0963c;">car2</div>
<div class="b" style="left:3.5px;top:61.5px;width:139.6px;height:38.5px;background:#e9e8e7;box-shadow:0 0 0 1px #d0cfce, 0 3px 8px rgba(0,0,0,.18);"></div>
<div class="t" style="left:16.60px;top:70.14px;font-size:21.8112px;-webkit-text-stroke:0.28px;letter-spacing:0.890px;color:#474747;">DomeLight</div>
</div></body></html>
